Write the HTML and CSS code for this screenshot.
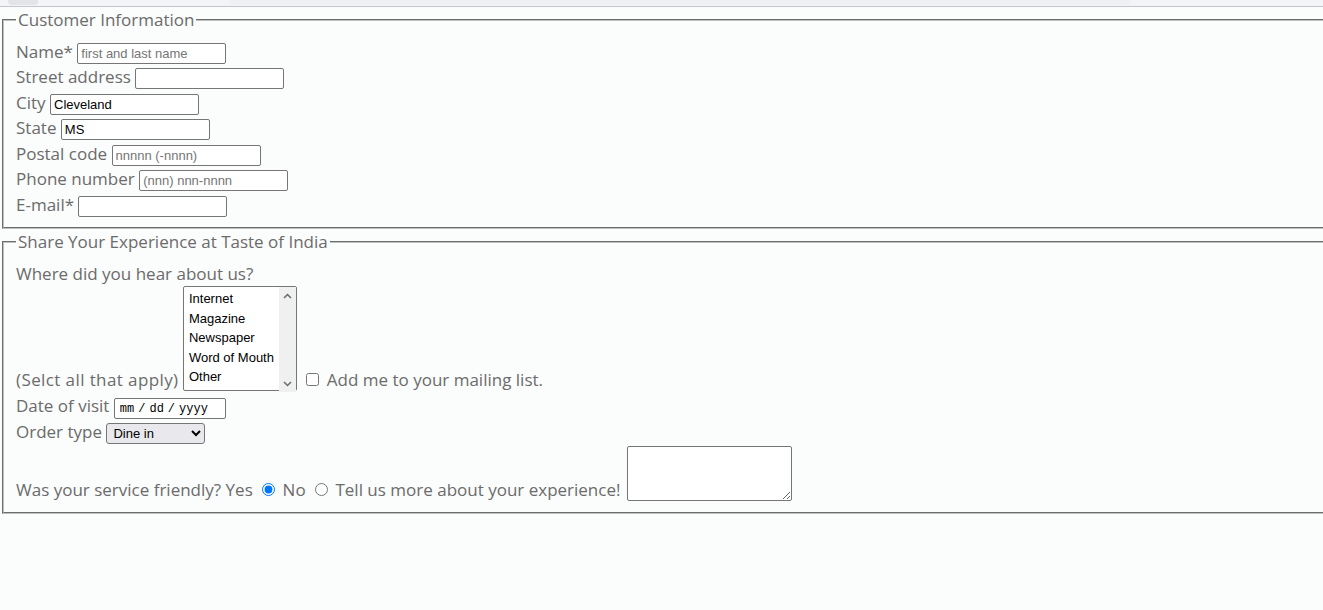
FILE: index.html
```html
<!DOCTYPE html>
<html lang="en">
<head>
<meta charset="utf-8">
<title>Taste of India - Feedback</title>
<link rel="stylesheet" href="styles.css">
</head>
<body>
<div class="topstrip"><span class="topbtn"></span><span class="topfield"></span></div>
<form class="form">
  <fieldset class="group">
    <legend class="legend">Customer Information</legend>
    <div class="row"><label for="name">Name*</label> <input class="field" type="text" id="name" placeholder="first and last name"></div>
    <div class="row"><label for="street">Street address</label> <input class="field" type="text" id="street"></div>
    <div class="row"><label for="city">City</label> <input class="field" type="text" id="city" value="Cleveland"></div>
    <div class="row"><label for="state">State</label> <input class="field" type="text" id="state" value="MS"></div>
    <div class="row"><label for="zip">Postal code</label> <input class="field" type="text" id="zip" placeholder="nnnnn (-nnnn)"></div>
    <div class="row"><label for="phone">Phone number</label> <input class="field" type="tel" id="phone" placeholder="(nnn) nnn-nnnn"></div>
    <div class="row"><label for="email">E-mail*</label> <input class="field" type="email" id="email"></div>
  </fieldset>
  <fieldset class="group">
    <legend class="legend">Share Your Experience at Taste of India</legend>
    <div class="row">Where did you hear about us?</div>
    <div class="row"><label class="hint" for="source">(Selct all that apply)</label> <span class="listwrap"><select class="listbox" id="source" multiple size="5">
        <option>Internet</option>
        <option>Magazine</option>
        <option>Newspaper</option>
        <option>Word of Mouth</option>
        <option>Other</option>
      </select><span class="fakebar"><svg class="arrow" width="9" height="6" viewBox="0 0 9 6"><path d="M1 5 L4.5 1.5 L8 5" fill="none" stroke="#6a6a6a" stroke-width="1.5"/></svg><svg class="arrow" width="9" height="6" viewBox="0 0 9 6"><path d="M1 1 L4.5 4.5 L8 1" fill="none" stroke="#6a6a6a" stroke-width="1.5"/></svg></span></span> <input class="check" type="checkbox" id="mail"> <label for="mail">Add me to your mailing list.</label></div>
    <div class="row"><label for="visit">Date of visit</label> <input class="datefield" type="date" id="visit"></div>
    <div class="row"><label for="order">Order type</label> <select class="dropdown" id="order">
        <option>Dine in</option>
        <option>Take out</option>
        <option>Delivery</option>
      </select></div>
    <div class="row">Was your service friendly? <label for="yes">Yes</label> <input class="radio" type="radio" name="friendly" id="yes" checked> <label for="no">No</label> <input class="radio" type="radio" name="friendly" id="no"> <label for="more">Tell us more about your experience!</label> <textarea class="comments" id="more"></textarea></div>
  </fieldset>
</form>
</body>
</html>
```
FILE: styles.css
```css
html {
  overflow: hidden;
  background: #fbfcfc;
}
body {
  margin: 0;
  font-family: "Open Sans", "DejaVu Sans", sans-serif;
  color: #6b6b6b;
}
.topstrip {
  height: 6px;
  background: #f3f4f7;
  border-bottom: 1px solid #c5c6c8;
  display: flex;
  padding-left: 8px;
  gap: 192px;
}
.topbtn {
  width: 30px;
  height: 5px;
  background: #e3e4e8;
  border-radius: 0 0 4px 4px;
}
.topfield {
  width: 900px;
  height: 5px;
  background: #eef0f4;
}
.form {
  margin: 0;
}
.group {
  margin: 0 -40px 0 2px;
  padding: 6px 12px 10px;
  border: 2px groove #c0c0c0;
  font-size: 17px;
  line-height: 25.5px;
}
.legend {
  padding: 0 2px;
}
.row {
  line-height: 25.5px;
}
.hint {
  letter-spacing: 0.4px;
}
.field {
  width: 149px;
  height: 21px;
  box-sizing: border-box;
  border: 1px solid #767676;
  border-radius: 2px;
  font: 13px "Liberation Sans", Arial, sans-serif;
  color: #000;
  padding: 1px 3px;
  margin: 0;
  vertical-align: baseline;
}
.field::placeholder {
  color: #757575;
}
.listwrap {
  position: relative;
  display: inline-block;
  vertical-align: baseline;
}
.listbox {
  width: 114px;
  height: 105px;
  box-sizing: border-box;
  border: 1px solid #767676;
  border-radius: 2px;
  font: 13px "Liberation Sans", Arial, sans-serif;
  color: #000;
  padding: 2px 0;
  overflow: hidden;
  margin: 0;
}
.listbox option {
  padding: 2px 5px;
  line-height: 16px;
}
.fakebar {
  position: absolute;
  top: 1px;
  right: 1px;
  bottom: 1px;
  width: 17px;
  background: #f0f0f0;
  display: flex;
  flex-direction: column;
  justify-content: space-between;
  align-items: center;
  padding: 6px 0 5px;
  box-sizing: border-box;
}
.check {
  margin: 0 3px 0 5px;
  width: 13px;
  height: 13px;
}
.datefield {
  width: 112px;
  height: 21px;
  box-sizing: border-box;
  border: 1px solid #767676;
  border-radius: 2px;
  font: 12px "Liberation Mono", monospace;
  color: #000;
  padding: 1px 4px;
  margin: 0;
}
.datefield::-webkit-datetime-edit-text {
  padding: 0 3px;
}
.datefield::-webkit-calendar-picker-indicator {
  display: none;
}
.dropdown {
  width: 99px;
  height: 21px;
  font: 13px "Liberation Sans", Arial, sans-serif;
  color: #000;
  margin: 0;
  background-color: #e9e9ed;
  border: 1px solid #767676;
  border-radius: 3px;
  padding: 0 2px;
}
.radio {
  margin: 3px 3px 0 5px;
}
.comments {
  width: 165px;
  height: 55px;
  box-sizing: border-box;
  border: 1px solid #767676;
  border-radius: 2px;
  margin: 1px 0 0 2px;
  vertical-align: -5px;
}
```
